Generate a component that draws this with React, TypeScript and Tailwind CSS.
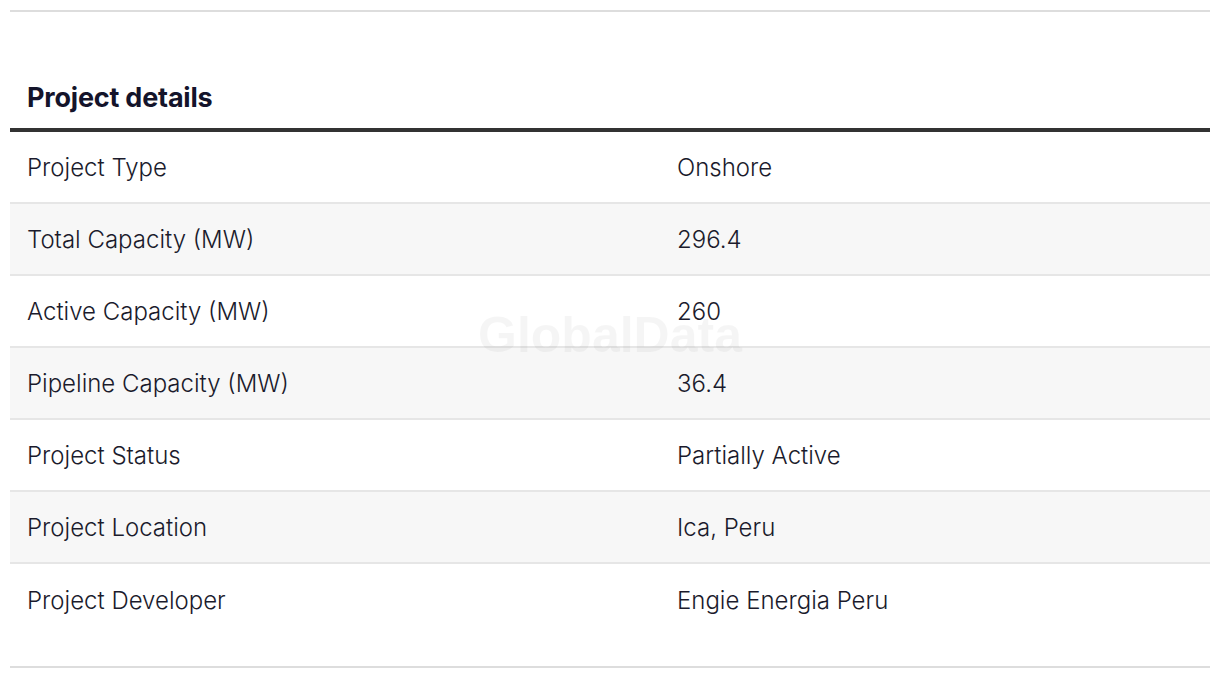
import React from 'react';

const rows: [string, string][] = [
  ['Project Type', 'Onshore'],
  ['Total Capacity (MW)', '296.4'],
  ['Active Capacity (MW)', '260'],
  ['Pipeline Capacity (MW)', '36.4'],
  ['Project Status', 'Partially Active'],
  ['Project Location', 'Ica, Peru'],
  ['Project Developer', 'Engie Energia Peru'],
];

export default function App() {
  return (
    <div className="w-[1220px] h-[678px] bg-white px-[10px] pt-[10px] text-[#1b1b2c]" style={{ fontFamily: 'Inter, "Liberation Sans", sans-serif' }}>
      <div className="border-t-2 border-[#dddddd]" />
      <h2 className="mt-[68px] px-[17px] text-[27px] leading-[36px] font-bold tracking-[-0.2px] text-[#14142b]">Project details</h2>
      <div className="relative mt-[12px] border-t-4 border-[#333333]">
        {rows.map(([label, value], i) => (
          <div
            key={label}
            className={`flex h-[72px] items-center pt-[1px] text-[24px] font-light ${i % 2 === 1 ? 'bg-[#f7f7f7]' : ''} ${i < rows.length - 1 ? 'border-b-2 border-[#e6e6e6]' : ''}`}
          >
            <div className="w-[650px] pl-[17px]">{label}</div>
            <div className="flex-1 pl-[17px]">{value}</div>
          </div>
        ))}
        <div className="pointer-events-none absolute left-0 right-0 top-[175px] flex justify-center">
          <span className="text-[50px] leading-[56px] font-bold text-black/[0.04]" style={{ fontFamily: '"Liberation Sans", Arial, sans-serif' }}>GlobalData</span>
        </div>
      </div>
      <div className="mt-[30px] border-t-2 border-[#dddddd]" />
    </div>
  );
}
